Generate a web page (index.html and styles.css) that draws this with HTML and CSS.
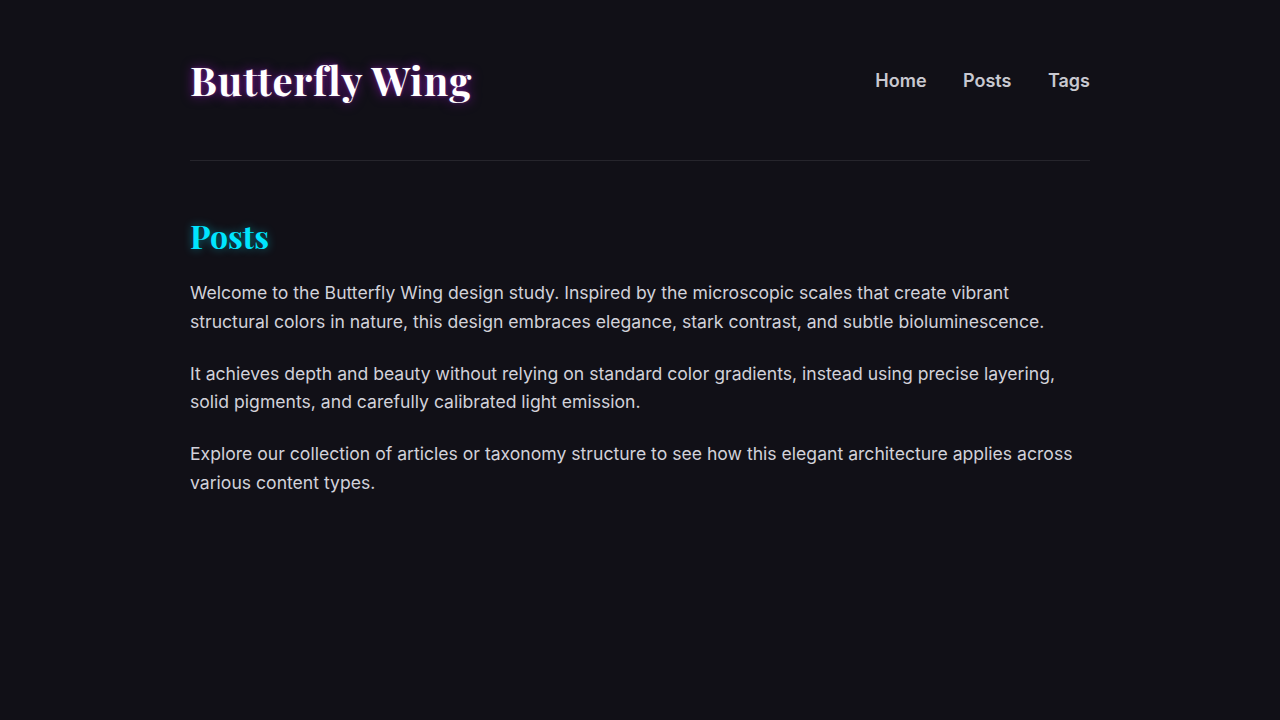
FILE: index.html
```html
<!DOCTYPE html>
<html lang="en">
<head>
    <meta charset="UTF-8">
    <meta name="viewport" content="width=device-width, initial-scale=1.0">
    <title>Posts - Butterfly Wing</title>
    <link rel="stylesheet" href="styles.css">
</head>
<body>
    <div class="container">
        <header class="site-header">
            <a class="site-title" href="#">Butterfly Wing</a>
            <nav class="site-nav">
                <a href="#">Home</a>
                <a href="#">Posts</a>
                <a href="#">Tags</a>
            </nav>
        </header>

        <main class="content">
            <h1 class="page-title">Posts</h1>
            <p>Welcome to the Butterfly Wing design study. Inspired by the microscopic scales that create vibrant structural colors in nature, this design embraces elegance, stark contrast, and subtle bioluminescence.</p>
            <p>It achieves depth and beauty without relying on standard color gradients, instead using precise layering, solid pigments, and carefully calibrated light emission.</p>
            <p>Explore our collection of articles or taxonomy structure to see how this elegant architecture applies across various content types.</p>
        </main>
    </div>
</body>
</html>
```

FILE: styles.css
```css
body {
    margin: 0;
    background: #111017;
    color: #d2d2da;
    font-family: Inter, 'Noto Sans', sans-serif;
    min-height: 100vh;
}

a {
    text-decoration: none;
}

.container {
    max-width: 900px;
    margin: 0 auto;
}

.site-header {
    display: flex;
    justify-content: space-between;
    align-items: center;
    padding: 54px 0;
    border-bottom: 1px solid #26252c;
}

.site-title {
    font-family: 'Playfair Display', 'Liberation Serif', serif;
    font-weight: 700;
    font-size: 40px;
    line-height: 1.3;
    letter-spacing: 1.1px;
    color: #ffffff;
    text-shadow: 0 0 12px rgba(170, 20, 220, 0.6), 0 0 3px rgba(220, 110, 255, 0.35);
}

.site-nav {
    display: flex;
    gap: 36.5px;
}

.site-nav a {
    font-size: 18px;
    font-weight: 600;
    color: #c8c8d0;
}

.content {
    padding-top: 56px;
}

.page-title {
    font-family: 'Playfair Display', 'Liberation Serif', serif;
    font-weight: 700;
    font-size: 32px;
    line-height: 1.2;
    color: #00e5ff;
    margin: 0 0 24px;
    text-shadow: 0 0 10px rgba(0, 229, 255, 0.45);
}

.content p {
    font-size: 17.6px;
    line-height: 1.62;
    margin: 0 0 23.5px;
}
```
